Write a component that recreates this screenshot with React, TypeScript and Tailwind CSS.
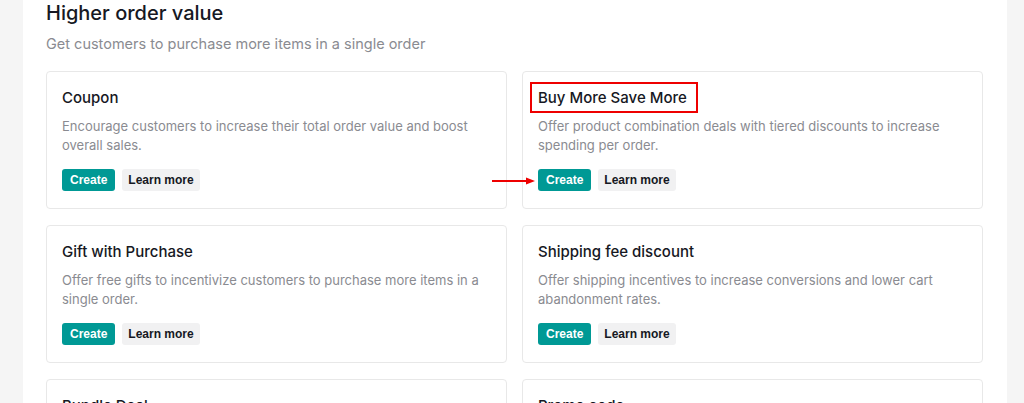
import React from 'react';

type Tool = { title: string; desc: string };

const tools: Tool[] = [
  { title: 'Coupon', desc: 'Encourage customers to increase their total order value and boost overall sales.' },
  { title: 'Buy More Save More', desc: 'Offer product combination deals with tiered discounts to increase spending per order.' },
  { title: 'Gift with Purchase', desc: 'Offer free gifts to incentivize customers to purchase more items in a single order.' },
  { title: 'Shipping fee discount', desc: 'Offer shipping incentives to increase conversions and lower cart abandonment rates.' },
  { title: 'Bundle Deal', desc: 'Sell products together at a discounted price to raise average order value.' },
  { title: 'Promo code', desc: 'Share exclusive codes with customers to drive more purchases.' },
];

const Card: React.FC<{ tool: Tool; highlight?: boolean }> = ({ tool, highlight }) => (
  <div className="relative border border-[#e8e8e8] rounded-[4px] bg-white pt-[15px] pb-[17px] px-[15px]">
    <div className="h-[22px] flex items-center">
      <span className="text-[15px] font-medium text-[#161823] leading-[22px]">{tool.title}</span>
    </div>
    {highlight && (
      <div className="absolute left-[7px] top-[10px] w-[168px] h-[31px] border-2 border-[#ee0000]" />
    )}
    <p className="mt-[8px] text-[13px] leading-[19px] text-[#8a8b91]">{tool.desc}</p>
    <div className="mt-[14px] flex gap-[7px]" style={{ fontFamily: '"Liberation Sans", Arial, sans-serif' }}>
      <button className="h-[22px] px-[8px] rounded-[3px] bg-[#009995] text-white text-[12px] font-bold leading-none">Create</button>
      <button className="h-[22px] px-[6px] rounded-[3px] bg-[#f1f1f2] text-[#161823] text-[12px] font-bold leading-none">Learn more</button>
    </div>
    {highlight && (
      <svg className="absolute left-[-31px] top-[104px]" width="44" height="10" viewBox="0 0 44 10">
        <line x1="0" y1="5" x2="36" y2="5" stroke="#ee0000" strokeWidth="2" />
        <polygon points="34,1.5 43,5 34,8.5" fill="#ee0000" />
      </svg>
    )}
  </div>
);

export default function App() {
  return (
    <div className="h-[403px] overflow-hidden bg-[#f5f5f5] pl-[23px] pr-[17px]" style={{ fontFamily: 'Inter, "Noto Sans", sans-serif' }}>
      <div className="h-full bg-white px-[23px] pt-[1px]">
        <h2 className="text-[20px] font-medium text-[#161823] leading-[24px]">Higher order value</h2>
        <p className="mt-[8px] text-[14.5px] text-[#8a8b91] leading-[22px]">Get customers to purchase more items in a single order</p>
        <div className="mt-[16px] grid grid-cols-2 gap-x-[15px] gap-y-[16px] w-[937px]">
          {tools.map((t, i) => (
            <Card key={t.title} tool={t} highlight={i === 1} />
          ))}
        </div>
      </div>
    </div>
  );
}
